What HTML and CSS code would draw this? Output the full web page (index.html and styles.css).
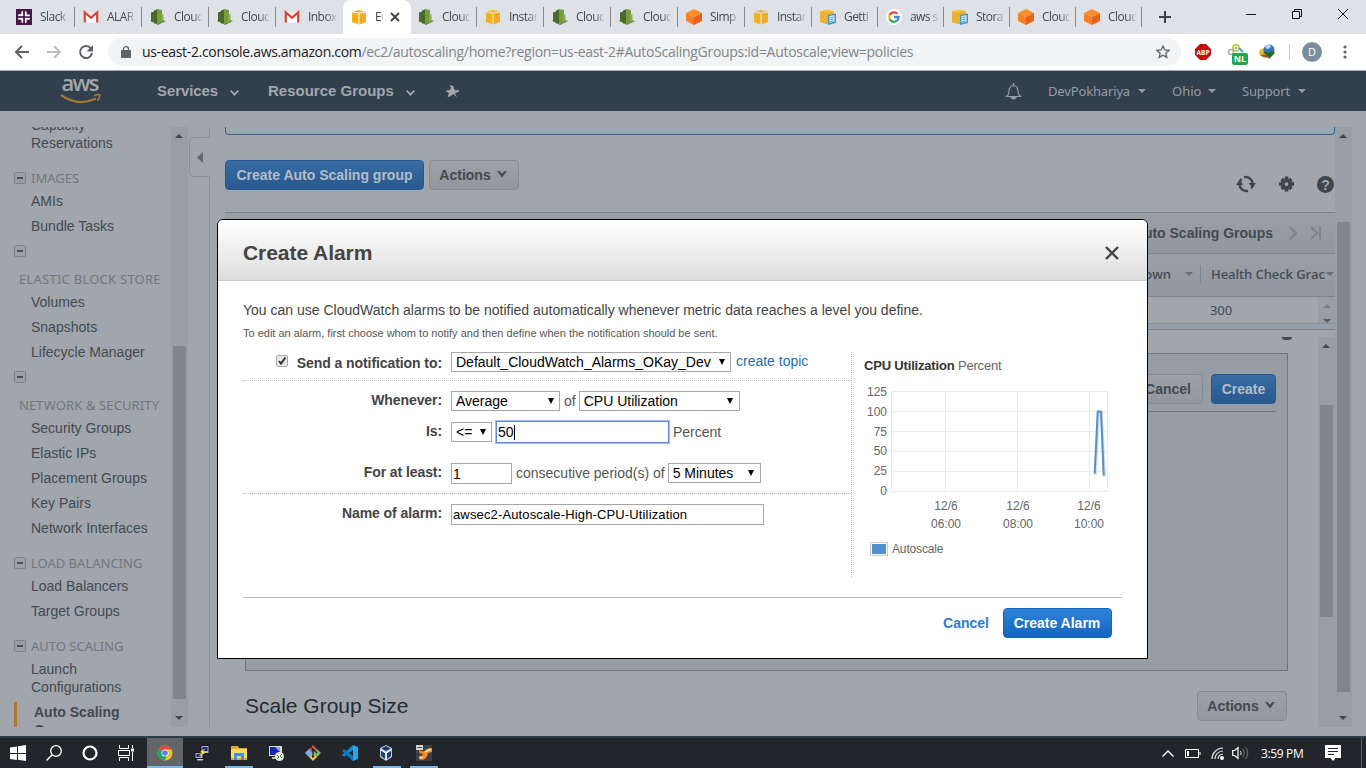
FILE: index.html
```html
<!DOCTYPE html>
<html lang="en">
<head>
<meta charset="utf-8">
<title>EC2 Management Console</title>
<link rel="stylesheet" href="styles.css">
</head>
<body>
<svg width="0" height="0" class="defs">
  <symbol id="slack" viewBox="0 0 16 16"><rect width="16" height="16" fill="#4a154b"/><g fill="none" stroke="#fff" stroke-width="1.900" stroke-linecap="round"><path d="M6.300 3v3M3 6.300h.200M3.500 6.300h3M9.700 3.200v3.300M10 6.500h3M3 9.700h3M6.400 9.700v3.200M9.700 9.700H13M9.700 9.700V13"/></g><path d="M8 2v12M2 8h12" stroke="#4a154b" stroke-width=".9"/></symbol>
  <symbol id="gmail" viewBox="0 0 16 16"><path d="M1 3h14v10.500H1z" fill="#eceaea"/><path d="M3 13.500V6l5 4 5-4v7.500z" fill="#fff"/><path d="M1.800 13.500V3.500L8 8.800l6.200-5.300v10" fill="none" stroke="#d9453a" stroke-width="2.200"/></symbol>
  <symbol id="watch" viewBox="0 0 16 16"><path d="M0 11.500l8-2 8 2.500-8 4z" fill="#648339"/><path d="M1 3.500l3-1v11l-3-1z" fill="#4b6a2b"/><path d="M4 1.500L8 0v14l-4 .5z" fill="#486a26"/><path d="M7 0l5 1v12.500l-5 1.500z" fill="#759c3e"/><path d="M11 5l2.500.5V12l-2.500.5z" fill="#86ad4c"/></symbol>
  <symbol id="cube" viewBox="0 0 16 16"><path d="M1 3.500l6.500 1v11L1 13z" fill="#f2b21f"/><path d="M15 3.500l-6.500 1v11L15 13z" fill="#efac2d"/><path d="M2 2.300L8 1l6 1.300L8 3.700z" fill="#f8b51c"/><path d="M7.500 4.500h1v11h-1z" fill="#f9d580"/></symbol>
  <symbol id="ocube" viewBox="0 0 16 16"><path d="M8 0l8 4-8 4-8-4z" fill="#f9902c"/><path d="M0 4l8 4v8l-8-4z" fill="#f58025"/><path d="M16 4L8 8v8l8-4z" fill="#e8601f"/></symbol>
  <symbol id="doccube" viewBox="0 0 16 16"><path d="M0 2.500L7 1l7 1.500v11L7 15l-7-2z" fill="#f0ad2a"/><path d="M7 4v11l-7-2V2.500z" fill="#e9b13c"/><path d="M0 2.300L7 .500l7 1.800-7 1.200z" fill="#ffc326"/><path d="M8 6l8-1.500V14l-8 2z" fill="#3b98c8"/><path d="M9.500 7l5-.8v6.600l-5 1z" fill="#e5f3fa"/><path d="M10.500 8.500l3-.5M10.500 10.500l3-.5M10.500 12.500l3-.5" stroke="#3b98c8"/></symbol>
  <symbol id="google" viewBox="0 0 16 16"><circle cx="8" cy="8" r="8" fill="#fff"/><g fill="none" stroke-width="2.300"><path d="M11.400 4.800A4.700 4.700 0 0 0 3.700 6" stroke="#ea4335"/><path d="M3.700 6a4.700 4.700 0 0 0 0 4" stroke="#fbbc05"/><path d="M3.700 10a4.700 4.700 0 0 0 7.300 1.700" stroke="#34a853"/><path d="M11 11.700A4.600 4.600 0 0 0 12.600 8H8" stroke="#4285f4"/></g></symbol>
  <symbol id="minus" viewBox="0 0 12 12"><rect x=".5" y=".5" width="11" height="11" rx="1" fill="#9aa0a7" stroke="#7b8187"/><path d="M3 6h6" stroke="#4a5057" stroke-width="2"/></symbol>
  <symbol id="down" viewBox="0 0 8 4"><path d="M0 0h8L4 4z" fill="currentColor"/></symbol>
  <symbol id="up" viewBox="0 0 8 4"><path d="M0 4h8L4 0z" fill="currentColor"/></symbol>
  <symbol id="vee" viewBox="0 0 9 6"><path d="M.7.700l3.800 4 3.800-4" fill="none" stroke="currentColor" stroke-width="1.700"/></symbol>
  <symbol id="fatvee" viewBox="0 0 10 7"><path d="M0 0h2.500L5 2.800 7.500 0H10L5 6.500z" fill="currentColor"/></symbol>
</svg>

<header class="tabs">
  <div class="tab"><svg><use href="#slack"/></svg><span>Slack</span></div>
  <div class="tab"><svg><use href="#gmail"/></svg><span>ALAR</span></div>
  <div class="tab"><svg><use href="#watch"/></svg><span>Cloud</span></div>
  <div class="tab"><svg><use href="#watch"/></svg><span>Cloud</span></div>
  <div class="tab nosep"><svg><use href="#gmail"/></svg><span>Inbox</span></div>
  <div class="tab active"><svg><use href="#cube"/></svg><span>EC</span><svg class="tab-x" viewBox="0 0 10 10"><path d="M1 1l8 8M9 1L1 9" stroke="#3c4043" stroke-width="1.800"/></svg></div>
  <div class="tab"><svg><use href="#watch"/></svg><span>Cloud</span></div>
  <div class="tab"><svg><use href="#cube"/></svg><span>Instar</span></div>
  <div class="tab"><svg><use href="#watch"/></svg><span>Cloud</span></div>
  <div class="tab"><svg><use href="#watch"/></svg><span>Cloud</span></div>
  <div class="tab"><svg><use href="#ocube"/></svg><span>Simp</span></div>
  <div class="tab"><svg><use href="#cube"/></svg><span>Instar</span></div>
  <div class="tab n"><svg><use href="#doccube"/></svg><span>Getti</span></div>
  <div class="tab n"><svg><use href="#google"/></svg><span>aws s</span></div>
  <div class="tab n"><svg><use href="#doccube"/></svg><span>Stora</span></div>
  <div class="tab n"><svg><use href="#ocube"/></svg><span>Cloud</span></div>
  <div class="tab n"><svg><use href="#ocube"/></svg><span>Cloud</span></div>
  <svg class="plus" viewBox="0 0 12 12"><path d="M6 0v12M0 6h12" stroke="#3c4043" stroke-width="2"/></svg>
  <div class="win">
    <svg width="10" height="10"><path d="M0 5.500h10" stroke="#111"/></svg>
    <svg width="10" height="10"><path d="M.5 2.500h7v7h-7zM2.500 2.500v-2h7v7h-2" fill="none" stroke="#111"/></svg>
    <svg width="10" height="10"><path d="M0 0l10 10M10 0L0 10" stroke="#111"/></svg>
  </div>
</header>

<div class="bar">
  <svg class="nav-i" viewBox="0 0 16 16"><path d="M15 8H2M8 2L2 8l6 6" fill="none" stroke="#5f6368" stroke-width="2"/></svg>
  <svg class="nav-i" viewBox="0 0 16 16"><path d="M1 8h13M8 2l6 6-6 6" fill="none" stroke="#bcbfc2" stroke-width="2"/></svg>
  <svg class="nav-i" viewBox="0 0 16 16"><path d="M13 4.600A6 6 0 1 0 14 9" fill="none" stroke="#5f6368" stroke-width="2"/><path d="M15 1v6.500H8.500z" fill="#5f6368"/></svg>
  <div class="url">
    <svg width="10" height="12"><path d="M1 4h8a1 1 0 0 1 1 1v6a1 1 0 0 1-1 1H1a1 1 0 0 1-1-1V5a1 1 0 0 1 1-1z" fill="#5f6368"/><path d="M2.500 5V3a2.500 2.300 0 0 1 5 0v2" fill="none" stroke="#5f6368" stroke-width="1.300"/></svg>
    <p><b>us-east-2.console.aws.amazon.com</b><span>/ec2/autoscaling/home?region=us-east-2#AutoScalingGroups:id=Autoscale;view=policies</span></p>
    <svg class="star" width="14" height="14" viewBox="0 0 14 14"><path d="M7 1l1.800 4 4.300.4-3.300 2.800 1 4.200L7 10.200l-3.800 2.200 1-4.200L.9 5.400l4.300-.4z" fill="none" stroke="#5f6368" stroke-width="1.300"/></svg>
  </div>
  <div class="ext">
    <svg width="16" height="16" viewBox="0 0 16 16"><path d="M5 0h6l5 5v6l-5 5H5l-5-5V5z" fill="#c70d0d"/><text x="8" y="10.800" text-anchor="middle" class="abp">ABP</text></svg>
    <div class="proxy"><svg width="17" height="14" viewBox="0 0 17 14"><circle cx="9" cy="4" r="3" fill="none" stroke="#b9d54d" stroke-width="2"/><circle cx="4" cy="8" r="2.500" fill="none" stroke="#aaa" stroke-width="1.500"/><path d="M12 4l4 4" stroke="#42a5e8" stroke-width="2"/><circle cx="9" cy="4" r="1" fill="#888"/></svg><i>NL</i></div>
    <svg width="16" height="16" viewBox="0 0 16 16"><ellipse cx="6" cy="8.500" rx="6" ry="4.500" fill="#e5c22c"/><path d="M1 11q5 4 9 2l-2-3z" fill="#c04a28"/><circle cx="10" cy="6" r="5.500" fill="#3672b8"/><path d="M6 3q3-4 6-1-1 3-4 3z" fill="#b8d8f2"/><path d="M8 8h4V6l4 3-6 6-2-4q-2-2-4-2 2-2 4-1z" fill="#236b23"/></svg>
    <u></u>
    <em>D</em>
    <svg width="4" height="16"><circle cx="2" cy="3" r="1.600" fill="#5f6368"/><circle cx="2" cy="8" r="1.600" fill="#5f6368"/><circle cx="2" cy="13" r="1.600" fill="#5f6368"/></svg>
  </div>
</div>

<nav class="aws">
  <svg class="logo" width="44" height="32" viewBox="0 0 44 32"><text x="1.500" y="17" textLength="38" class="awst">aws</text><path d="M1 21q17 12 35 3.500" fill="none" stroke="#a5753a" stroke-width="2.200"/><path d="M34 21.500q6-1.500 6-.5t-2.500 6" fill="none" stroke="#a5753a" stroke-width="1.600"/></svg>
  <span class="m1">Services</span><svg class="v"><use href="#vee"/></svg>
  <span class="m2">Resource Groups</span><svg class="v"><use href="#vee"/></svg>
  <svg class="pin" width="13" height="13" viewBox="0 0 13 13"><path d="M4.500 0L8 1.500 7.500 3l2 2.500 3-.5.5 1.500-4 2 2 4-3.500-3.500L3 12l-1.500-.5 1.500-3.500L0 6.500 1 5l3 .3L5 2.500 4 1.500z" fill="#a1a7ad"/></svg>
  <div class="right">
    <svg class="bell" width="17" height="17" viewBox="0 0 17 17"><path d="M1.500 13.500q2.500-2 2.500-5 0-5.500 4.500-6 4.500.5 4.500 6 0 3 2.500 5z" fill="none" stroke="#959ca3" stroke-width="1.200"/><path d="M8.500 0v2M6.500 14.500q2 2.500 4 0z" stroke="#959ca3" fill="#959ca3" stroke-width="1.500"/></svg>
    <span class="r1">DevPokhariya</span><svg class="t"><use href="#down"/></svg>
    <span class="r2">Ohio</span><svg class="t"><use href="#down"/></svg>
    <span class="r3">Support</span><svg class="t"><use href="#down"/></svg>
  </div>
</nav>

<main class="page">
  <aside class="side">
    <a>Capacity<br>Reservations</a>
    <h4><svg><use href="#minus"/></svg>IMAGES</h4>
    <a>AMIs</a><a>Bundle Tasks</a>
    <div class="fold"><svg><use href="#minus"/></svg></div>
    <h4 class="wide s1">ELASTIC BLOCK STORE</h4>
    <a>Volumes</a><a>Snapshots</a><a>Lifecycle Manager</a>
    <div class="fold"><svg><use href="#minus"/></svg></div>
    <h4 class="wide">NETWORK &amp; SECURITY</h4>
    <a>Security Groups</a><a>Elastic IPs</a><a>Placement Groups</a><a>Key Pairs</a><a>Network Interfaces</a>
    <h4><svg><use href="#minus"/></svg>LOAD BALANCING</h4>
    <a>Load Balancers</a><a>Target Groups</a>
    <h4><svg><use href="#minus"/></svg>AUTO SCALING</h4>
    <a>Launch<br>Configurations</a>
    <a class="cur">Auto Scaling<br>Groups</a>
  </aside>
  <div class="scroll sb1"><svg><use href="#up"/></svg><i></i><svg><use href="#down"/></svg></div>
  <div class="gutter"><div class="g1"></div><div class="handle"><svg width="6" height="11"><path d="M6 0v11L0 5.500z" fill="#5f666d"/></svg></div><div class="g2"></div></div>
  <section class="content">
    <div class="info"></div>
    <div class="actions">
      <button class="btn blue w199">Create Auto Scaling group</button>
      <button class="btn grey w90">Actions<svg><use href="#fatvee"/></svg></button>
      <div class="tools">
        <svg width="20" height="18" viewBox="0 0 20 18"><path d="M3.300 9.500A6.700 6.700 0 0 1 5.500 4M8 2.200a7 7 0 0 1 8.500 6M16.700 9a7 7 0 0 1-1.500 4.500M12 15.800A7 7 0 0 1 3.500 10" fill="none" stroke="#3e454c" stroke-width="2.400"/><path d="M0 10l3.600-5L7.500 10zM12.500 8H20l-3.500 5z" fill="#3e454c"/></svg>
        <svg width="15" height="16" viewBox="0 0 16 16"><g stroke="#3e454c" stroke-width="3.800"><path d="M8 0v16M0 8h16M2.800 2.800l10.400 10.400M13.200 2.800L2.800 13.200"/></g><circle cx="8" cy="8" r="6" fill="#3e454c"/><circle cx="8" cy="8" r="2" fill="#a0a6ac"/></svg>
        <svg width="17" height="17"><circle cx="8.500" cy="8.500" r="8.500" fill="#3e454c"/><text x="8.500" y="13.500" text-anchor="middle" class="q">?</text></svg>
      </div>
    </div>
    <div class="pager"><b>Auto Scaling Groups</b><svg width="8" height="14"><path d="M1 1l6 6-6 6" fill="none" stroke="#7c838a" stroke-width="2"/></svg><svg width="12" height="14"><path d="M1 1l6 6-6 6M10 0v14" fill="none" stroke="#7c838a" stroke-width="2"/></svg></div>
    <div class="thead"><b>Cooldown</b><svg class="t"><use href="#down"/></svg><i></i><b class="hc">Health Check Grac</b><svg class="t"><use href="#down"/></svg></div>
    <div class="trow"><span>300</span><div class="mini"><svg><use href="#up"/></svg><svg><use href="#down"/></svg></div></div>
    <div class="split"></div>
    <div class="lower">
      <div class="lowmain">
        <div class="knob"><i></i></div>
        <div class="panel"><div class="prow"><button class="btn grey w77">Cancel</button><button class="btn blue w65">Create</button></div></div>
        <div class="sgs"><h3>Scale Group Size</h3><button class="btn grey w90">Actions<svg><use href="#fatvee"/></svg></button></div>
      </div>
      <div class="scroll sb2"><svg><use href="#up"/></svg><i></i></div>
    </div>
  </section>
  <div class="scroll sb3"><svg><use href="#up"/></svg><i></i><svg><use href="#down"/></svg></div>
</main>

<footer class="task">
  <div class="k"><svg width="16" height="16"><path d="M0 2.500l7-1V8H0zM8 1.300L16 0v8H8zM0 9h7v6L0 14zM8 9h8v7l-8-1.200z" fill="#fff"/></svg></div>
  <div class="k"><svg width="16" height="16"><circle cx="10" cy="6" r="5.300" fill="none" stroke="#fff" stroke-width="1.300"/><path d="M6 10l-5.500 5.500" stroke="#fff" stroke-width="1.500"/></svg></div>
  <div class="k"><svg width="16" height="16"><circle cx="8" cy="8" r="6.500" fill="none" stroke="#fff" stroke-width="2.200"/></svg></div>
  <div class="k"><svg width="17" height="16"><path d="M1.500 0v3.500h9V0M1.500 16v-3.500h9V16M.500 5.500h11v5H.500zM14.500 0v3M14.500 7v9" fill="none" stroke="#fff"/><path d="M13 3.500h3v3h-3z" fill="#fff"/></svg></div>
  <div class="k hot"><svg width="16" height="16" viewBox="0 0 16 16"><circle cx="8" cy="8" r="7.500" fill="#fbc116"/><path d="M8 8L1.500 4.200A7.500 7.500 0 0 1 14.500 4.500H8z" fill="#dd4b3e"/><path d="M8 8L1.500 4.200A7.500 7.500 0 0 0 7.500 15.500L11 9z" fill="#1ea362"/><circle cx="8" cy="8" r="3.500" fill="#fff"/><circle cx="8" cy="8" r="2.800" fill="#4a86ee"/></svg></div>
  <div class="k w"><svg width="16" height="16"><path d="M7 .500h8v8H7zM1 7.500h8v6H1z" fill="#bbb" stroke="#111"/><path d="M8.500 2h5v4h-5zM2.500 9h4v3h-4z" fill="#10189b"/><path d="M3 14h6v1.500H3z" fill="#ccc"/><path d="M12 3L6 7l2 1-4 4 7-4-2-1.500z" fill="#ffed22"/></svg></div>
  <div class="k w on"><svg width="16" height="16"><path d="M0 1h7l1 2h8v12H0z" fill="#e9a71f"/><path d="M0 4h16v9H0z" fill="#ffd968"/><path d="M3 8h10v7h-3v-4H6v4H3z" fill="#3c94d8"/></svg></div>
  <div class="k w"><svg width="16" height="16"><path d="M1 1h13v10H1z" fill="#ddd8c9"/><path d="M2 2h10v8H2z" fill="#1427ad"/><path d="M7 2h5v5z" fill="#90a8ee"/><path d="M4 12h7v2H4z" fill="#bbb"/><circle cx="11.500" cy="11.500" r="4.500" fill="#e6e9e2"/><path d="M9 10l2 2-2 2M14 9l-2 2 2 2" fill="none" stroke="#35953b"/></svg></div>
  <div class="k w"><svg width="16" height="16"><path d="M8 0l4 4-4 4-4-4z" fill="#dd5145"/><path d="M4 4l4 4-4 4-4-4z" fill="#78aeea"/><path d="M12 4l4 4-4 4-4-4z" fill="#78b85a"/><path d="M8 8l4 4-4 4-4-4z" fill="#f1c94e"/><path d="M5 1l7 7M8 5v7" stroke="#24282e" stroke-width="1.200"/><circle cx="8" cy="5" r="1.300" fill="#24282e"/><circle cx="8" cy="11.500" r="1.300" fill="#24282e"/></svg></div>
  <div class="k w"><svg width="16" height="16"><path d="M11 0l5 2v12l-5 2z" fill="#29a5ee"/><path d="M11 0v5L2 12l-2-2z" fill="#1586cf"/><path d="M11 16v-5L2 4 0 6z" fill="#087ac0"/></svg></div>
  <div class="k w on"><svg class="lift" width="16" height="16"><path d="M8 0l6 3v9l-6 4-6-4V3z" fill="#b9c7d9"/><path d="M8 1l4.500 2.500L8 6 3.500 3.500z" fill="#173a68"/><path d="M3 5l4 2.500V14l-4-3zM13 5L9 7.500V14l4-3z" fill="#1c4272"/><path d="M3 5l5 3 5-3M8 8v7" fill="none" stroke="#fff" stroke-width="1.100"/></svg></div>
  <div class="k w on"><svg width="16" height="16"><path d="M0 0h16v16H0z" fill="#3c3f48"/><path d="M3 5q4 2 6 1 1-3 7-3v4l-4 1q-1 6-6 7l-3-1v-3q4 0 4-2-3 0-4-2z" fill="#f58b24"/><path d="M9 7l4-2 2-.5M4 13l3-1" stroke="#ffe3a0" stroke-width="1.500"/><path d="M0 0h7v5H0z" fill="#d4d4d4"/><path d="M1 2.500h5" stroke="#555"/></svg></div>
  <div class="tray">
    <svg width="12" height="7"><path d="M.5 6.500L6 1l5.500 5.500" fill="none" stroke="#fff" stroke-width="1.300"/></svg>
    <svg class="bat" width="16" height="9"><path d="M.5.500h13v8H.5zM15 3v3" fill="none" stroke="#fff"/><path d="M2 2h2v5H2z" fill="#fff"/></svg>
    <svg class="wifi" width="13" height="13"><g fill="none" stroke="#ddd" stroke-width="1.200"><path d="M1 12A11 11 0 0 1 12 1M4 12a8 8 0 0 1 8-8M7 12a5 5 0 0 1 5-5"/></g><circle cx="11" cy="11" r="2" fill="#fff"/></svg>
    <svg class="vol" width="17" height="14"><path d="M.7 4.500h2L6 1.500v11l-3.300-3h-2z" fill="none" stroke="#fff" stroke-width="1.200"/><path d="M8.500 5q1.500 2 0 4" fill="none" stroke="#ddd"/><path d="M11 3q3 4 0 8M13.500 1q4.500 6 0 12" fill="none" stroke="#70757a"/></svg>
    <time>3:59 PM</time>
    <svg class="note" width="16" height="16"><path d="M0 0h16v13H10.500L8 16 5.500 13H0z" fill="#fff"/><path d="M3 3.500h10M3 6.500h10M3 9.500h6" stroke="#24282e"/></svg>
    <i></i>
  </div>
</footer>

<section class="modal">
  <header><h2>Create Alarm</h2><svg width="14" height="14" viewBox="0 0 14 14"><path d="M1 1l12 12M13 1L1 13" stroke="#444" stroke-width="2.400"/></svg></header>
  <p class="lead">You can use CloudWatch alarms to be notified automatically whenever metric data reaches a level you define.</p>
  <p class="hint">To edit an alarm, first choose whom to notify and then define when the notification should be sent.</p>
  <div class="cols">
    <div class="form">
      <div class="row a"><label><svg class="chk" width="12" height="12"><rect x=".5" y=".5" width="11" height="11" rx="1.500" fill="#e8e8e8" stroke="#aaa"/><path d="M3 6l2 2.500 4.500-6" fill="none" stroke="#333" stroke-width="2"/></svg>Send a notification to:</label><div class="sel w280">Default_CloudWatch_Alarms_OKay_Dev<i></i></div><a>create topic</a></div>
      <div class="row b"><label>Whenever:</label><div class="sel w109">Average<i></i></div><span class="of">of</span><div class="sel w161">CPU Utilization<i></i></div></div>
      <div class="row c"><label>Is:</label><div class="sel w41">&lt;=<i></i></div><div class="inp focus">50<s></s></div><span>Percent</span></div>
      <div class="row d"><label>For at least:</label><div class="inp w61">1</div><span class="cp">consecutive period(s) of</span><div class="sel w93">5 Minutes<i></i></div></div>
      <div class="row e"><label>Name of alarm:</label><div class="inp w313">awsec2-Autoscale-High-CPU-Utilization</div></div>
    </div>
    <div class="chart">
      <h5><b>CPU Utilization</b> Percent</h5>
      <svg width="252" height="190" viewBox="860 380 252 190">
        <path d="M891.500 391.500h216v100h-216zM891.500 411.500h216M891.500 431.500h216M891.500 451.500h216M891.500 471.500h216M945.500 391.500v100M1017.500 391.500v100M1089.500 391.500v100" fill="none" stroke="#ebebeb"/>
        <path d="M1095.500 475l3-62h3l3 64" fill="none" stroke="#ddd" stroke-width="3"/>
        <path d="M1094.700 473.500l3-62h3.300l2.700 64" fill="none" stroke="#4f92d0" stroke-width="2"/>
        <g class="lab" text-anchor="end"><text x="887" y="396">125</text><text x="887" y="416">100</text><text x="887" y="436">75</text><text x="887" y="455">50</text><text x="887" y="475">25</text><text x="887" y="495">0</text></g>
        <g class="lab" text-anchor="middle"><text x="946" y="510">12/6</text><text x="946" y="528">06:00</text><text x="1018" y="510">12/6</text><text x="1018" y="528">08:00</text><text x="1089" y="510">12/6</text><text x="1089" y="528">10:00</text></g>
        <rect x="870.500" y="542.500" width="17" height="13" fill="#fff" stroke="#ccc"/><rect x="872" y="544" width="14" height="10" fill="#4f92d0"/>
        <text class="lab" x="892" y="553" textLength="51.500">Autoscale</text>
      </svg>
    </div>
  </div>
  <div class="foot"><b>Cancel</b><button class="btn vivid w109b">Create Alarm</button></div>
</section>
</body>
</html>
```

FILE: styles.css
```css
* { box-sizing: border-box; }
body { margin: 0; width: 1366px; height: 768px; overflow: hidden; display: flex; flex-direction: column; font: 14px/18px "Liberation Sans", Arial, sans-serif; position: relative; background: #a0a6ac; }
h2, h3, h4, h5, p { margin: 0; }
svg { flex: none; display: block; }
.defs { position: absolute; }

/* browser chrome */
.tabs { height: 34px; flex: none; background: #dee1e6; display: flex; padding-left: 8px; font: 12px/34px "Open Sans", sans-serif; color: #45494d; }
.tab { width: 67px; flex: none; display: flex; align-items: center; padding-left: 8px; gap: 8px; background: linear-gradient(#85898e, #85898e) right 7px / 1px 20px no-repeat; }
.tab.n { width: 66px; }
.tab > svg { width: 16px; height: 16px; }
.tab span { width: 28px; white-space: nowrap; overflow: hidden; letter-spacing: -.55px; -webkit-mask-image: linear-gradient(90deg, #000 65%, rgba(0,0,0,.15)); mask-image: linear-gradient(90deg, #000 65%, rgba(0,0,0,.15)); }
.tab.nosep { background: none; }
.tab.active { background: #fff; border-radius: 8px 8px 0 0; margin-right: -1px; width: 68px; }
.tab.active span { width: 8px; }
.tab.active > .tab-x { width: 10px; height: 10px; margin-left: -1px; }
.plus { width: 12px; height: 12px; margin: 11px 0 0 17px; }
.win { display: flex; gap: 36px; margin: 9px 0 0 75px; }
.bar { height: 36px; flex: none; background: #fff; display: flex; align-items: center; padding-left: 14px; gap: 16px; }
.nav-i { width: 16px; height: 16px; }
.url { width: 1073px; height: 28px; margin-left: -2px; border-radius: 14px; background: #f1f3f4; display: flex; align-items: center; padding-left: 13px; font: 14px/28px "Open Sans", sans-serif; }
.url p { flex: 1; margin-left: 11px; white-space: nowrap; color: #80868b; }
.url b { font-weight: 400; color: #202124; letter-spacing: -.33px; }
.url span { letter-spacing: -.29px; }
.star { margin-right: 11px; }
.ext { display: flex; align-items: center; margin-left: -2px; }
.abp { font: bold 6.500px "Open Sans", sans-serif; fill: #fff; }
.proxy { position: relative; margin: -3px 15px 0 16px; }
.proxy i { position: absolute; left: 5px; top: 9px; width: 16px; height: 12px; border-radius: 2px; background: #1fa94f; color: #fff; font: bold 9px/12px "Open Sans", sans-serif; text-align: center; }
.ext u { width: 1px; height: 16px; background: #cdcfd2; margin: 0 12px 0 14px; }
.ext em { width: 20px; height: 20px; border-radius: 10px; background: #78909c; color: #fff; font: 11px/20px "Open Sans", sans-serif; text-align: center; margin-right: 21px; }

/* AWS navigation */
.aws { height: 41px; flex: none; border-top: 1px solid #a2a8ad; background: #323f4c; color: #a1a7ad; display: flex; align-items: center; font-weight: bold; font-size: 15px; }
.logo { margin: -3px 53px 0 60px; }
.awst { font: 600 22px "Open Sans", sans-serif; fill: #a1a7ad; }
.v { width: 9px; height: 6px; margin-top: 3px; }
.m1 { width: 73px; letter-spacing: -.1px; }
.m2 { width: 138px; margin-left: 29px; }
.pin { margin-left: 31px; }
.right { margin-left: 545.500px; display: flex; align-items: center; font: 13px "Noto Sans", sans-serif; color: #959ca3; }
.t { width: 8px; height: 4px; }
.r1 { width: 90px; margin-left: 26.500px; letter-spacing: -.15px; }
.r2 { width: 36px; margin-left: 26px; }
.r3 { width: 56px; margin-left: 26px; letter-spacing: -.15px; }

/* dimmed console page */
.page { height: 625px; flex: none; padding-top: 16px; display: flex; color: #434a51; }
.side { width: 171px; height: 600px; overflow: hidden; padding-left: 31px; display: flex; flex-direction: column; gap: 7px; }
.side > * { flex: none; }
.side a:first-child { margin-top: -11px; }
.side h4 { margin: 10px 0 -2px -17px; display: flex; align-items: center; gap: 5px; font: 13px/18px "Noto Sans", sans-serif; color: #71777e; letter-spacing: 0; white-space: nowrap; }
.side h4 svg, .fold svg { width: 12px; height: 12px; }
.side h4.wide { margin: 3px 0 -2px -12px; letter-spacing: .12px; }
.side h4.s1 { letter-spacing: .25px; }
.fold { height: 18px; margin-left: -17px; display: flex; align-items: center; }
.side .cur { margin: -1px 0 0 -17px; border-left: 3px solid #b0782f; padding: 1px 0 0 17px; font-weight: bold; }
.scroll { width: 17px; height: 600px; background: #989ea5; display: flex; flex-direction: column; align-items: center; color: #40464d; flex: none; }
.scroll svg { width: 8px; height: 4px; margin: 7px 1px 0 0; }
.scroll i { width: 13px; background: #80868e; }
.sb1 i { height: 353px; margin-top: 208px; }
.sb1 svg:last-child { margin-top: 17px; }
.gutter { width: 22px; height: 600px; padding-left: 1px; display: flex; flex-direction: column; }
.g1 { height: 10px; border-right: 1px solid #8b9197; }
.g2 { flex: 1; border-right: 1px solid #8b9197; }
.handle { height: 40px; border: 1px solid #8b9197; border-right: 0; border-radius: 5px 0 0 5px; display: flex; align-items: center; padding-left: 7px; }
.content { width: 1110px; height: 600px; margin-left: 15px; overflow: hidden; flex: none; }
.info { height: 8px; border: 1px solid #2f6498; border-top: 0; border-radius: 0 0 4px 4px; background: #99a7b0; }
.actions { height: 77px; padding-top: 25px; display: flex; gap: 5px; }
.btn { height: 30px; border-radius: 4px; font: bold 14px/28px "Liberation Sans", Arial, sans-serif; padding: 0; letter-spacing: 0; white-space: nowrap; display: flex; justify-content: center; align-items: center; gap: 8px; border: 1px solid #858b92; flex: none; }
.btn svg { width: 10px; height: 7px; margin: -1px 2px 0 -2px; }
.blue { background: linear-gradient(#376ca4, #28598f); border-color: #26598f; color: #b6bdc5; }
.grey { background: linear-gradient(#9ca2a8, #91979e); color: #434a51; }
.vivid { background: linear-gradient(#3084dc, #1264bd); border-color: #1464b8; color: #fff; }
.w199 { width: 199px; } .w90 { width: 90px; } .w77 { width: 77px; padding-right: 7px; } .w65 { width: 65px; } .w109b { width: 109px; padding-right: 1px; }
.w77 { width: 70px; padding: 0; }
.tools { margin-left: auto; padding-right: 1px; display: flex; align-items: center; height: 48px; gap: 23px; }
.q { font: bold 14px "Liberation Sans", sans-serif; fill: #a0a6ac; }
.pager { height: 41px; border-top: 1px solid #7d8389; background: linear-gradient(#999fa5, #91979e); display: flex; align-items: center; justify-content: flex-end; padding-right: 13px; }
.pager b { margin-right: 16px; }
.pager svg + svg { margin-left: 13px; }
.thead { height: 44px; border: solid #7d8389; border-width: 1px 0; background: linear-gradient(#999fa5, #91979e); display: flex; align-items: center; justify-content: flex-end; padding-bottom: 2px; font: 600 13px/18px "Open Sans", sans-serif; color: #474e55; }
.thead b { font-weight: 600; }
.thead .t { color: #656b72; margin-left: 14px; }
.thead i { width: 1px; height: 18px; background: #7d8389; margin: 0 10px 0 7px; }
.thead .hc { width: 115px; white-space: nowrap; letter-spacing: -.1px; }
.thead .hc + .t { margin: 0 1px 0 0; }
.trow { height: 27px; display: flex; padding-left: 985px; justify-content: space-between; font: 13px/26px "Noto Sans", sans-serif; letter-spacing: -.1px; border-bottom: 1px solid #8a9096; }
.mini { width: 17px; background: #989ea5; display: flex; flex-direction: column; align-items: center; padding-top: 7px; gap: 11px; color: #555c63; }
.mini svg { width: 8px; height: 4px; }
.mini svg:first-child { color: #7a8087; }
.split { height: 6px; background: #95a1ac; border-bottom: 1px solid #7d8389; }
.lower { display: flex; padding-top: 7px; }
.lowmain { width: 1093px; padding-left: 20px; }
.knob { height: 16px; padding-left: 1037px; }
.knob i { display: block; width: 10px; height: 3px; background: #434a51; border-radius: 0 0 5px 5px; }
.panel { width: 1043px; height: 318px; border: 1px solid #6e757c; background: #969ca3; padding: 20px 11px 0; }
.prow { display: flex; justify-content: flex-end; gap: 8px; height: 38px; border-bottom: 1px solid #6e757c; }
.sgs { display: flex; justify-content: space-between; width: 1042px; margin-top: 20px; }
.sgs h3 { font: 21px/30px "Liberation Sans", Arial, sans-serif; color: #252b31; }
.sb2 { height: 390px; } .sb2 i { height: 212px; margin-top: 57px; }
.sb3 i { height: 470px; margin-top: 84px; } .sb3 svg:last-child { margin-top: 24px; }

/* alarm dialog */
.modal { position: absolute; left: 217px; top: 219px; width: 931px; height: 440px; background: #fff; border: 1px solid #000; border-radius: 6px 6px 0 0; color: #444; }
.modal header { height: 61px; border-bottom: 1px solid #ccc; border-radius: 5px 5px 0 0; background: linear-gradient(#fff, #dedede); padding: 6px 28px 0 25px; display: flex; justify-content: space-between; align-items: center; }
.modal h2 { font: bold 21px/24px "Liberation Sans", Arial, sans-serif; letter-spacing: -.05px; }
.lead { margin: 20px 25px 0; white-space: nowrap; }
.hint { margin: 6px 25px 0; font-size: 11px; line-height: 16px; color: #555; white-space: nowrap; }
.cols { margin: 11px 25px 0; height: 225px; display: flex; }
.form { width: 609px; border-right: 1px dotted #bbb; }
.row { display: flex; white-space: nowrap; }
.row label { width: 199px; margin-right: 9px; font-weight: bold; line-height: 20px; display: flex; justify-content: flex-end; flex: none; letter-spacing: -.08px; }
.row span { line-height: 21px; margin-left: 4px; color: #555; }
.row a { color: #1f6fb5; margin-left: 5px; }
.row.a { height: 29px; border-bottom: 1px dotted #bbb; }
.row.a label { line-height: 22px; }
.chk { margin: 3px 9px 0 0; }
.row.b { padding-top: 10px; height: 40px; }
.row.b label, .row.e label { line-height: 18px; }
.row.c { height: 42px; }
.row.c .sel { margin-top: 1px; }
.row.c label { line-height: 21px; }
.row.c span { line-height: 23px; }
.row.d { height: 31px; border-bottom: 1px dotted #bbb; }
.row.d label { line-height: 19px; }
.row.e { padding-top: 10px; }
.sel { height: 20px; border: 1px solid #a6a6a6; padding-left: 4px; color: #000; line-height: 19px; display: flex; justify-content: space-between; flex: none; }
.sel i { width: 0; height: 0; border: 3.500px solid transparent; border-top: 6px solid #000; border-bottom: 0; margin: 6px 5.500px 0 0; }
.inp { height: 21px; border: 1px solid #a6a6a6; padding-left: 1px; color: #000; line-height: 20px; flex: none; }
.w280 { width: 280px; } .w109 { width: 109px; } .w161 { width: 161px; } .w41 { width: 41px; } .w93 { width: 93px; } .w61 { width: 61px; }
.w313 { width: 313px; font-size: 13px; letter-spacing: .14px; }
.row .of { margin-right: 3px; }
.row .cp { margin-right: 3px; }
.focus { width: 173px; height: 22px; margin-left: 4px; border: 1px solid #5f8fdc; box-shadow: 0 0 0 1px #a3c0f0; line-height: 21px; font-size: 14px; display: flex; align-items: center; }
.focus s { width: 1px; height: 15px; background: #000; }
.chart { padding: 4px 0 0 8px; }
.chart h5 { font: 13px/20px "Liberation Sans", sans-serif; padding-left: 4px; height: 24px; color: #666; letter-spacing: -.18px; }
.chart h5 b { color: #333; }
.lab { font: 12px "Liberation Sans", sans-serif; fill: #666; }
.foot { margin: 20px 25px 0; border-top: 1px solid #b8b8b8; padding: 10px 10px 0 0; display: flex; justify-content: flex-end; align-items: center; gap: 14px; }
.foot b { color: #2b7ad6; }

/* taskbar */
.task { height: 32px; flex: none; border-top: 2px solid #2e3d4c; background: #22262b; display: flex; color: #fff; }
.k { width: 36px; display: flex; align-items: center; justify-content: center; }
.k.hot { margin-left: 3px; background: #626669; border-bottom: 2px solid #76b9ed; }
.k.hot svg { margin-top: 2px; }
.k.w { width: 37px; }
.k.on { background: linear-gradient(#76b9ed, #76b9ed) 5px bottom / 28px 2px no-repeat; }
.lift { margin: -1px 2px 0 0; }
.tray { margin-left: auto; display: flex; align-items: center; }
.bat { margin-left: 11px; } .wifi { margin-left: 10px; } .vol { margin-left: 8px; }
time { width: 64px; margin-left: 12px; font: 12px "Open Sans", sans-serif; letter-spacing: -.35px; }
.tray i { width: 1px; height: 30px; background: #5b6065; margin: 0 4px 0 20px; }
```
